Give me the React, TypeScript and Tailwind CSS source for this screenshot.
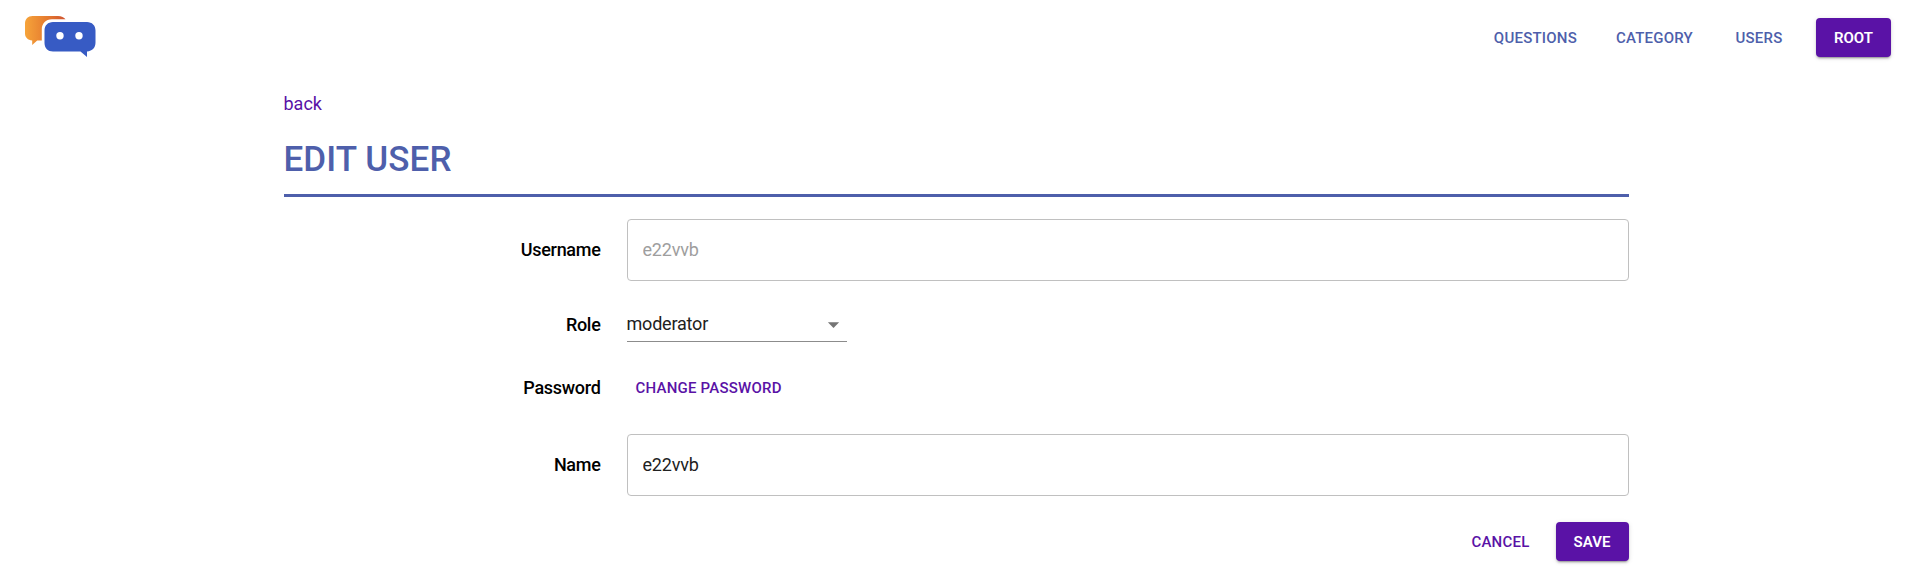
import type { ReactNode } from "react";

const raised =
  "shadow-[0_3px_1px_-2px_rgba(0,0,0,0.2),0_2px_2px_0_rgba(0,0,0,0.14),0_1px_5px_0_rgba(0,0,0,0.12)]";
const flatText = "text-[15px] leading-[27px] font-medium tracking-[0.22px] uppercase";
const solidText = "pt-px text-[15px] leading-[27px] font-semibold tracking-normal uppercase";

function Logo() {
  return (
    <svg width="74" height="46" viewBox="0 0 74 46" aria-label="Logo">
      <defs>
        <linearGradient id="bubble" x1="0" y1="0" x2="1" y2="0">
          <stop offset="0" stopColor="#f6a43a" />
          <stop offset="0.55" stopColor="#e57a2f" />
          <stop offset="1" stopColor="#cf5330" />
        </linearGradient>
      </defs>
      <path
        d="M8.5 1H34C37.5 1 40 2.3 41.5 4.2H28C21.5 4.2 17.8 9 17.8 14V25.5H13.2L8.2 30V25.5C3.8 25.2 1 22.3 1 18.5V8.5C1 4 4 1 8.5 1Z"
        fill="url(#bubble)"
      />
      <path
        d="M29 7H63C68 7 71.5 10.5 71.5 15.5V27.5C71.5 32.5 68.5 36 63 36.5V42L56.5 36.5H29C24 36.5 20.5 33 20.5 28V15.5C20.5 10.5 24 7 29 7Z"
        fill="#375bc4"
      />
      <circle cx="36" cy="20.7" r="3.7" fill="white" />
      <circle cx="55" cy="20.7" r="3.7" fill="white" />
    </svg>
  );
}

function NavItem({ children }: { children: ReactNode }) {
  return (
    <button className={`${flatText} min-w-[72px] px-[9px] pt-[7px] pb-[6px] text-[#4e5fab]`}>
      {children}
    </button>
  );
}

function Field({ label, children }: { label: string; children: ReactNode }) {
  return (
    <div className="flex items-center">
      <label className="mr-[26px] w-[317px] pb-px text-right font-medium tracking-[-0.3px]">{label}</label>
      <div className="flex-1">{children}</div>
    </div>
  );
}

const inputBox =
  "block h-[62px] w-full rounded-[4px] border border-[#c0c0c0] bg-white px-[15px] pb-px tracking-[-0.2px] outline-none";

export default function App() {
  return (
    <div className="min-h-[568px] bg-white font-['Roboto',sans-serif] text-[18px] leading-[27px] text-black">
      <header className="flex h-[75px] items-center justify-between pr-[21px] pl-[24px]">
        <Logo />
        <nav className="flex items-center gap-[21px]">
          <NavItem>Questions</NavItem>
          <NavItem>Category</NavItem>
          <NavItem>Users</NavItem>
          <button className={`${solidText} ${raised} h-[39px] w-[75px] rounded-[4px] bg-[#5a12a6] text-white`}>
            Root
          </button>
        </nav>
      </header>
      <main className="mx-auto w-[1345px] pt-[15px]">
        <a href="#" className="block text-[#5a12a6]">
          back
        </a>
        <h1 className="mt-[20px] h-[60px] border-b-3 border-[#4e5fab] pt-px text-[35px] leading-[44px] font-medium tracking-[0.1px] text-[#4e5fab]">
          EDIT USER
        </h1>
        <form className="mt-[22px]">
          <Field label="Username">
            <input className={`${inputBox} text-[#9e9e9e]`} defaultValue="e22vvb" disabled />
          </Field>
          <div className="mt-[26px]">
            <Field label="Role">
              <div className="flex h-[35px] w-[220px] items-center justify-between border-b border-[#8c8c8c] text-[#212121]">
                <span className="pb-[2px] tracking-[-0.2px]">moderator</span>
                <svg width="27" height="27" viewBox="0 0 24 24" fill="#757575">
                  <path d="M7 10l5 5 5-5z" />
                </svg>
              </div>
            </Field>
          </div>
          <div className="mt-[26px]">
            <Field label="Password">
              <button type="button" className={`${flatText} block h-[39px] px-[9px] pt-px text-[#5a12a6]`}>
                Change password
              </button>
            </Field>
          </div>
          <div className="mt-[27px]">
            <Field label="Name">
              <input className={`${inputBox} text-[#212121]`} defaultValue="e22vvb" />
            </Field>
          </div>
          <div className="mt-[26px] flex justify-end gap-[17px]">
            <button type="button" className={`${flatText} h-[39px] px-[9px] pt-px text-[#5a12a6]`}>
              Cancel
            </button>
            <button
              type="button"
              className={`${solidText} ${raised} h-[39px] w-[73px] rounded-[4px] bg-[#5a12a6] text-white`}
            >
              Save
            </button>
          </div>
        </form>
      </main>
    </div>
  );
}
